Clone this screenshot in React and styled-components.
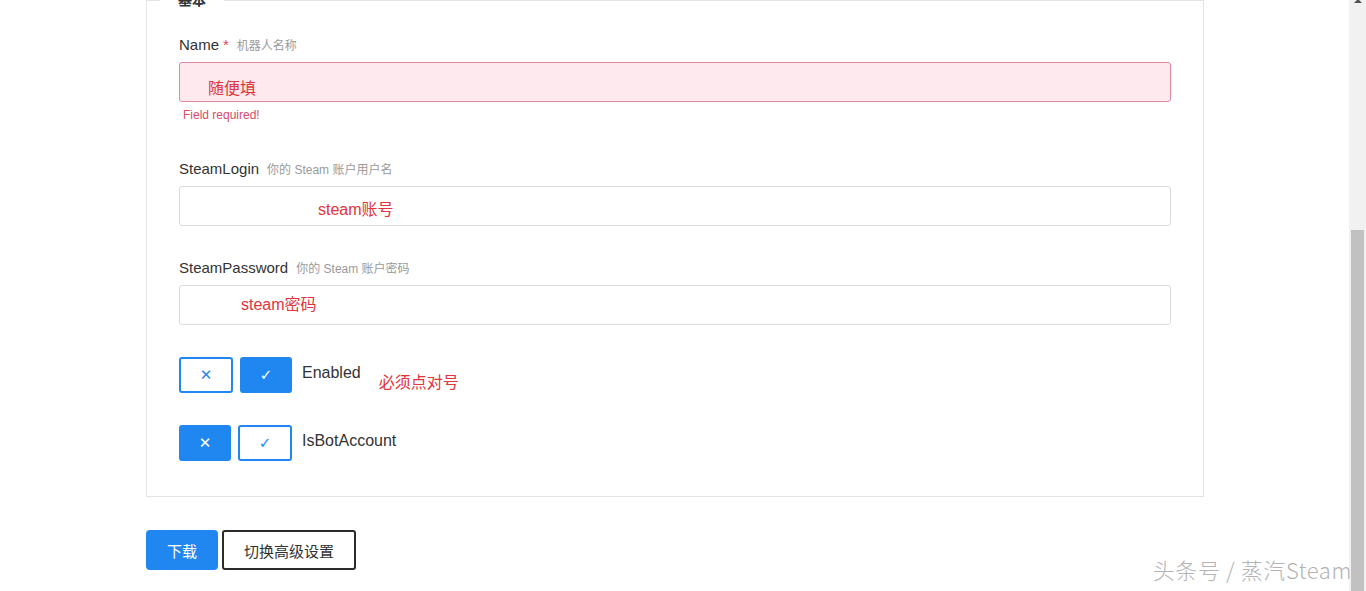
import styled, { createGlobalStyle } from "styled-components"

const GlobalStyle = createGlobalStyle`
    html, body {
        margin: 0;
        height: 591px;
        overflow: hidden;
        background: #fff;
        font-family: "Liberation Sans", "Noto Sans CJK SC", sans-serif;
        color: #333;
    }
`

const fields = [
    { name: "SteamLogin", hint: "你的 Steam 账户用户名", value: "steam账号", indent: 138, shift: 2 },
    { name: "SteamPassword", hint: "你的 Steam 账户密码", value: "steam密码", indent: 61, shift: -2 },
]

function Toggle({ on, label, note }) {
    return (
        <ToggleRow>
            <SwitchButton $active={!on}>✕</SwitchButton>
            <SwitchButton $active={on}>✓</SwitchButton>
            <ToggleLabel>{label}</ToggleLabel>
            {note && <Note>{note}</Note>}
        </ToggleRow>
    )
}

export default function App(){
    return(
        <Page>
            <GlobalStyle />
            <Main>
                <Fieldset>
                    <Legend>基本</Legend>
                    <Field>
                        <Label>
                            Name <Required>*</Required>
                            <Hint>机器人名称</Hint>
                        </Label>
                        <Input $error $indent={28} $shift={5} defaultValue="随便填" readOnly />
                        <ErrorText>Field required!</ErrorText>
                    </Field>
                    {fields.map(f => (
                        <Field key={f.name}>
                            <Label>
                                {f.name}
                                <Hint>{f.hint}</Hint>
                            </Label>
                            <Input $indent={f.indent} $shift={f.shift} defaultValue={f.value} readOnly />
                        </Field>
                    ))}
                    <Toggle on label="Enabled" note="必须点对号" />
                    <Toggle on={false} label="IsBotAccount" />
                </Fieldset>
                <Actions>
                    <PrimaryButton>下载</PrimaryButton>
                    <OutlineButton>切换高级设置</OutlineButton>
                </Actions>
            </Main>
            <Scrollbar>
                <ScrollArrow />
                <ScrollThumb />
            </Scrollbar>
            <Watermark>头条号 / 蒸汽Steam</Watermark>
        </Page>
    )
}

const Page = styled.div`
    position: relative;
    display: flex;
    height: 591px;
    overflow: hidden;
`
const Main = styled.div`
    flex: 1;
    padding-left: 146px;
`
const Fieldset = styled.fieldset`
    box-sizing: border-box;
    width: 1058px;
    margin: -10px 0 0;
    padding: 25px 32px 35px;
    border: 1px solid #e4e4e4;
    min-inline-size: 0;
`
const Legend = styled.legend`
    margin-left: -19px;
    padding: 0 18px;
    font-size: 14px;
    line-height: 20px;
    font-weight: bold;
    color: #333;
`
const Field = styled.div`
    display: flow-root;
    margin-bottom: 32px;
`
const Label = styled.div`
    display: flex;
    align-items: baseline;
    font-size: 15px;
    line-height: 20px;
    color: #333;
    margin-bottom: 6px;
`
const Required = styled.span`
    color: #e5465f;
    margin-left: 4px;
`
const Hint = styled.span`
    font-size: 12px;
    color: #9a9a9a;
    margin-left: 8px;
`
const Input = styled.input`
    display: block;
    box-sizing: border-box;
    width: 100%;
    height: 40px;
    padding: ${p => p.$shift > 0 ? p.$shift * 2 : 0}px 12px ${p => p.$shift < 0 ? -p.$shift * 2 : 0}px ${p => p.$indent}px;
    border: 1px solid ${p => p.$error ? "#e08aa2" : "#dcdcdc"};
    border-radius: 3px;
    background: ${p => p.$error ? "#fde9ee" : "#fff"};
    color: #e2343c;
    font-family: "Liberation Sans", "Noto Sans CJK SC", sans-serif;
    font-size: 16px;
    outline: none;
`
const ErrorText = styled.div`
    margin: 4px 0 3px 4px;
    font-size: 12px;
    line-height: 18px;
    color: #dc4a68;
`
const ToggleRow = styled.div`
    display: flex;
    align-items: center;
    margin-top: 32px;
`
const SwitchButton = styled.div`
    box-sizing: border-box;
    width: ${p => p.$active ? 52 : 54}px;
    height: 36px;
    margin-right: 7px;
    display: flex;
    align-items: center;
    justify-content: center;
    border: 2px solid #1f87ef;
    border-radius: 3px;
    background: ${p => p.$active ? "#1f87ef" : "#fff"};
    color: ${p => p.$active ? "#fff" : "#1f87ef"};
    font-family: "DejaVu Sans", sans-serif;
    font-size: 15px;
    font-weight: ${p => p.$active ? "bold" : "normal"};
`
const ToggleLabel = styled.span`
    margin-left: 3px;
    margin-top: -4px;
    font-size: 16px;
    color: #333;
`
const Note = styled.span`
    margin-left: 18px;
    margin-top: 12px;
    font-family: "Noto Sans CJK SC", sans-serif;
    font-size: 16px;
    color: #e2343c;
`
const Actions = styled.div`
    display: flex;
    gap: 4px;
    margin-top: 33px;
`
const PrimaryButton = styled.button`
    width: 72px;
    height: 40px;
    border: none;
    border-radius: 4px;
    background: #1f87ef;
    color: #fff;
    font-family: "Noto Sans CJK SC", sans-serif;
    font-size: 15px;
`
const OutlineButton = styled.button`
    width: 134px;
    height: 40px;
    border: 2px solid #2b2b2b;
    border-radius: 3px;
    background: #fff;
    color: #333;
    font-family: "Noto Sans CJK SC", sans-serif;
    font-size: 15px;
`
const Scrollbar = styled.div`
    width: 17px;
    flex-shrink: 0;
    display: flex;
    flex-direction: column;
    align-items: center;
    background: #f1f1f1;
`
const ScrollArrow = styled.div`
    width: 0;
    height: 0;
    margin-top: -1px;
    border-left: 4px solid transparent;
    border-right: 4px solid transparent;
    border-bottom: 4px solid #505050;
`
const ScrollThumb = styled.div`
    width: 13px;
    margin-top: auto;
    height: 361px;
    background: #c1c1c1;
`
const Watermark = styled.div`
    position: absolute;
    right: 14px;
    bottom: 6px;
    font-family: "Noto Sans CJK SC", sans-serif;
    font-size: 22px;
    letter-spacing: 0.6px;
    font-weight: 300;
    color: #b3b3b3;
    text-shadow: 0 0 2px #fff;
`
